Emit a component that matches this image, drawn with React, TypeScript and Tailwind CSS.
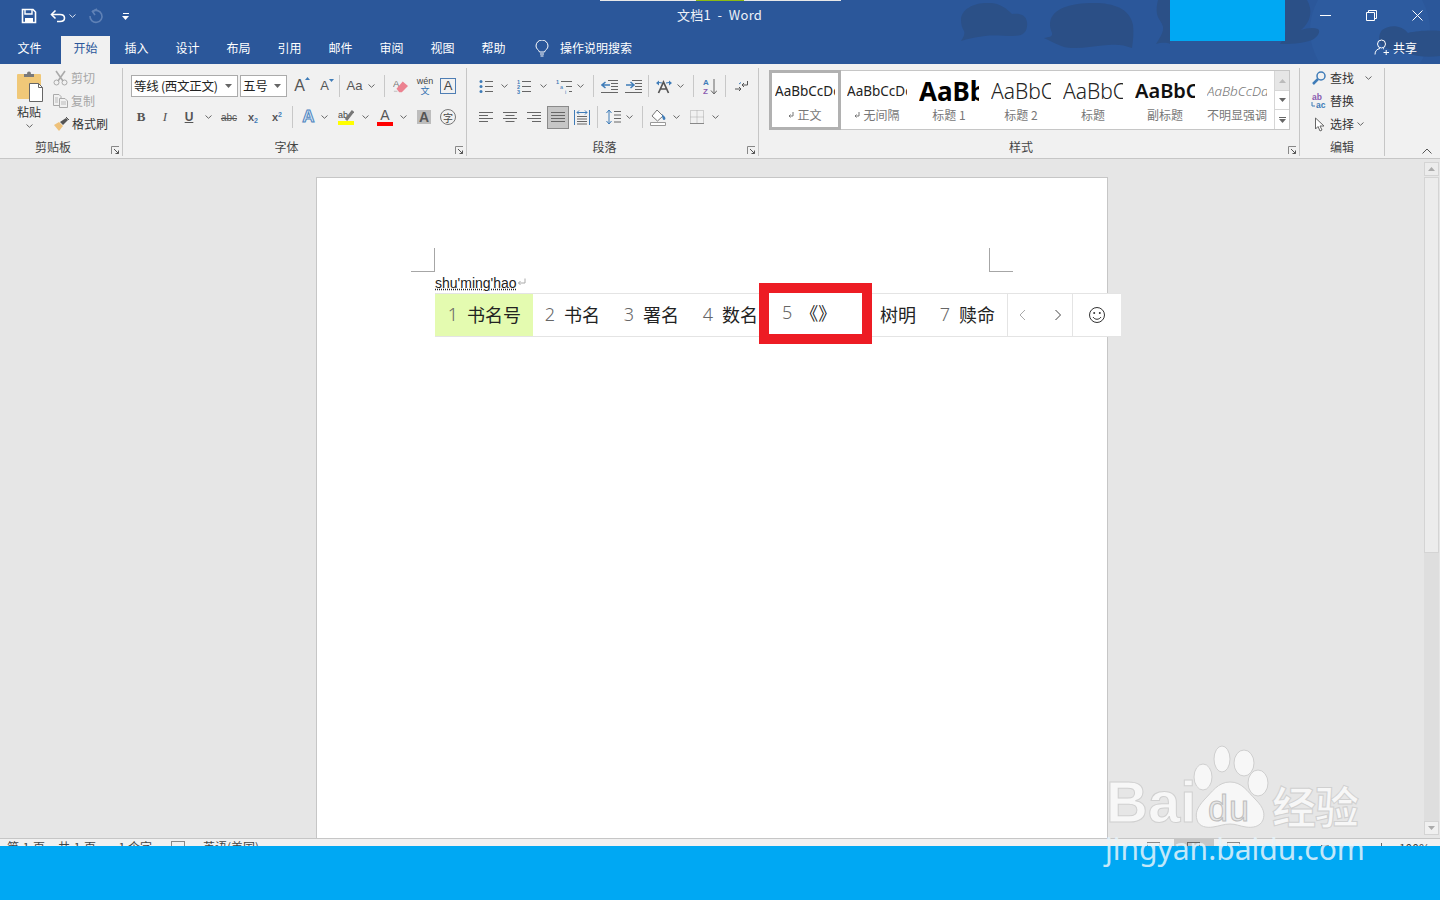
import React from "react";

const G = ({ w = 16, h = 16, className = "", children }: { w?: number; h?: number; className?: string; children: React.ReactNode }) => (
  <svg width={w} height={h} viewBox={`0 0 ${w} ${h}`} fill="none" className={className}>{children}</svg>
);
const Chev = ({ c = "#666" }: { c?: string }) => (
  <svg width="7" height="4" viewBox="0 0 7 4" fill="none" className="shrink-0"><path d="M0.500 0.500 3.500 3.300 6.500 0.500" stroke={c} strokeWidth="1" /></svg>
);
const Cell = ({ w, children }: { w: number; children?: React.ReactNode }) => (
  <div style={{ width: w }} className="flex h-full shrink-0 items-center justify-center">{children}</div>
);
const VSep = () => <div className="h-[22px] w-px shrink-0 bg-[#c8c8c8]" />;
const Launcher = () => (
  <svg width="9" height="9" viewBox="0 0 9 9" fill="none" className="shrink-0">
    <path d="M0.500 8V0.500H8" stroke="#888" />
    <path d="M3 3 7.500 7.500M7.500 4.500V7.500H4.500" stroke="#555" />
  </svg>
);
const Group = ({ w, label, lx, children }: { w: number; label: string; lx?: boolean; children: React.ReactNode }) => (
  <div style={{ width: w }} className="relative flex h-full shrink-0 flex-col border-r border-[#c6c6c6]">
    <div className="min-h-0 flex-1">{children}</div>
    <div className={`relative flex h-[18px] shrink-0 items-center justify-center text-[12px] text-[#444] ${lx !== false ? "pr-[16px]" : ""}`}>
      {label}
      {lx !== false && <div className="absolute right-[2px] top-[8px]"><Launcher /></div>}
    </div>
  </div>
);

const Align = ({ type }: { type: "l" | "c" | "r" | "j" }) => {
  const ws = type === "j" ? [14, 14, 14, 14] : [14, 9, 14, 9];
  return (
    <G w={14} h={12}>
      {ws.map((w, i) => {
        const x = type === "r" ? 14 - w : type === "c" ? (14 - w) / 2 : 0;
        return <path key={i} d={`M${x} ${i * 3 + 1.500}h${w}`} stroke="#666" />;
      })}
    </G>
  );
};

const tabs = ["插入", "设计", "布局", "引用", "邮件", "审阅", "视图", "帮助"];

const TitleBar = () => (
  <div className="relative flex h-[36px] shrink-0 items-center text-white">
    <div className="flex h-full items-center pb-[4px] pl-[21px]">
      <G w={16} h={16}>
        <path d="M1.500 1.500H12L14.500 4V14.500H1.500Z" stroke="#fff" strokeWidth="1.600" />
        <path d="M4 1.500V6H11V1.500" stroke="#fff" strokeWidth="1.400" />
        <path d="M4 14V10H12V14" fill="#fff" />
      </G>
      <div className="ml-[11px] flex items-center">
        <Cell w={20}>
          <svg width="16" height="14" viewBox="0 0 16 14" fill="none">
            <path d="M5.500 1.500 1.500 5.500 5.500 9.500" stroke="#fff" strokeWidth="1.600" />
            <path d="M2 5.500H10C13 5.500 14.500 7 14.500 9S13 12.500 10 12.500H7" stroke="#fff" strokeWidth="1.600" />
          </svg>
        </Cell>
        <div className="ml-[1px]"><Chev c="#dfe6f2" /></div>
      </div>
      <div className="ml-[12px]">
        <svg width="16" height="16" viewBox="0 0 16 16" fill="none">
          <path d="M4.500 3.500A6 6 0 1 1 2 8" stroke="#5f81b6" strokeWidth="1.600" />
          <path d="M9 1 4.500 3.500 7 7" stroke="#5f81b6" strokeWidth="1.600" />
        </svg>
      </div>
      <div className="ml-[18px] flex flex-col items-center gap-[2px]">
        <div className="h-px w-[6px] bg-white" />
        <svg width="7" height="4" viewBox="0 0 7 4"><path d="M0 0H7L3.500 4Z" fill="#fff" /></svg>
      </div>
    </div>
    <div className="absolute left-[677px] top-[6px] whitespace-pre text-[13px] leading-[18px] tracking-[0.300px] text-[#eef2f8]">文档1  -  Word</div>
    <div className="ml-auto flex h-full items-center pb-[6px]">
      <Cell w={46}><div className="h-px w-[11px] bg-white" /></Cell>
      <Cell w={46}>
        <svg width="11" height="11" viewBox="0 0 11 11" fill="none"><path d="M0.500 2.500H8.500V10.500H0.500ZM2.500 2.500V0.500H10.500V8.500H8.500" stroke="#fff" /></svg>
      </Cell>
      <Cell w={46}>
        <svg width="11" height="11" viewBox="0 0 11 11" fill="none"><path d="M0.500 0.500 10.500 10.500M10.500 0.500 0.500 10.500" stroke="#fff" /></svg>
      </Cell>
    </div>
  </div>
);

const TabBar = () => (
  <div className="relative flex h-[28px] shrink-0 items-stretch pl-[5px] text-[12px] text-white">
    <div className="flex w-[49px] items-center justify-center pb-[5px]">文件</div>
    <div className="ml-[7px] flex w-[49px] items-center justify-center bg-[#f1f1f1] pb-[5px] text-[#2b579a]">开始</div>
    <div className="ml-[2px] flex gap-[2px]">
      {tabs.map((t) => <div key={t} className="flex w-[49px] items-center justify-center pb-[5px]">{t}</div>)}
    </div>
    <div className="ml-[17px] flex items-center gap-[11px] pb-[4px]">
      <svg width="14" height="17" viewBox="0 0 14 17" fill="none">
        <path d="M4.500 12C4 10 1 9 1 6a6 6 0 0 1 12 0c0 3-3 4-3.500 6Z" stroke="#fff" />
        <path d="M5 14h4M5.500 16h3" stroke="#fff" />
      </svg>
      <span>操作说明搜索</span>
    </div>
    <div className="ml-auto mr-[23px] flex items-center gap-[3px] pb-[5px]">
      <svg width="16" height="17" viewBox="0 0 16 17" fill="none">
        <circle cx="7.500" cy="5" r="4" stroke="#fff" />
        <path d="M1 15.500C1 12 3 10 6 9.500M9 9.500 10 10" stroke="#fff" />
        <path d="M9.500 13.500H15M12.200 11V16" stroke="#fff" />
      </svg>
      <span>共享</span>
    </div>
  </div>
);

const Header = () => (
  <div className="relative shrink-0 bg-[#2b579a]">
    <svg className="absolute left-[950px] top-0" width="490" height="64" viewBox="0 0 490 64" fill="none">
      <circle cx="420" cy="30" r="60" fill="#2d5b9f" />
      <path d="M11 20C11 8 26 2 40 3c10 0 17 6 22 11 6-1 14 0 15 8 1 10-4 14-14 14-8 0-20-1-28 0-10 1-18 3-24 5 3-4 4-8 3-10-2-3-3-7-3-11Z" fill="#2b5087" />
      <path d="M100 25C100 10 116 4 140 3c20-1 40 4 43 22 1 8 0 16-1 23-8-3-14-4-24-3-14 1-32 5-44 2-6-2-12-5-20-9 5-1 9-1 8-5-1-3-2-5-2-8Z" fill="#2b4f86" />
      <path d="M208 0h12v44c-4-2-10-1-14 0 3-5 8-12 7-17-1-5-5-8-6-13-1-5 0-10 1-14Z" fill="#2b5087" />
      <path d="M335 0h22c6 10 4 22-6 30 6-2 12-3 17-1 3 2 0 8-6 11-10 4-24 4-32 4 6-8 6-14 5-20-1-8-1-16 0-24Z" fill="#2b5087" />
      <path d="M432 30c8-6 20-5 26 3 8-2 22-3 32-2v25c-14 2-24 0-34-3-8-2-16-3-22-6-6-4-6-12-2-17Z" fill="#2b5087" />
    </svg>
    <div className="absolute left-[600px] top-0 flex h-[1px] w-[241px] bg-[#e8e8e8]">
      <div className="ml-[96px] h-full w-[48px] bg-[#8dbb12]" />
    </div>
    <div className="absolute left-[1170px] top-0 h-[41px] w-[115px] bg-[#00a8f3]" />
    <TitleBar />
    <TabBar />
  </div>
);

const ClipboardGroup = () => (
  <Group w={123} label="剪贴板">
    <div className="flex pt-[3px]">
      <div className="ml-[13px] flex w-[32px] flex-col items-center">
        <svg width="30" height="31" viewBox="0 0 30 31" fill="none">
          <rect x="3" y="3" width="24" height="25" rx="1" fill="#f0c878" />
          <path d="M10 3h10v3H10Z" fill="#7a7a7a" />
          <circle cx="15" cy="2.500" r="2" fill="#7a7a7a" />
          <path d="M15.500 12.500h9l4 4v14h-13Z" fill="#fff" stroke="#666" />
          <path d="M24.500 12.500v4h4" stroke="#666" />
        </svg>
        <div className="mt-[1px] text-[12px] leading-[18px] text-[#333]">粘贴</div>
        <div className="mt-[3px]"><Chev /></div>
      </div>
      <div className="-mt-[2px] ml-[8px] flex flex-col gap-[5px] text-[12px] leading-[18px]">
        <div className="flex items-center gap-[3px] text-[#a6a6a6]">
          <svg width="15" height="16" viewBox="0 0 15 16" fill="none">
            <path d="M3 1 10 11M12 1 5 11" stroke="#aaa" strokeWidth="1.600" />
            <circle cx="3.500" cy="12.500" r="2.500" stroke="#aaa" /><circle cx="11.500" cy="12.500" r="2.500" stroke="#aaa" />
          </svg>
          <span>剪切</span>
        </div>
        <div className="flex items-center gap-[3px] text-[#a6a6a6]">
          <svg width="15" height="14" viewBox="0 0 15 14" fill="none">
            <path d="M0.500 0.500H6L8 2.500V11.500H0.500Z" stroke="#aaa" />
            <path d="M6.500 4.500H12L14.500 7V13.500H6.500Z" fill="#f1f1f1" stroke="#aaa" />
            <path d="M8 8h5M8 10h5M2 4h3M2 6h3M2 8h3" stroke="#bbb" />
          </svg>
          <span>复制</span>
        </div>
        <div className="flex items-center gap-[2px] text-[#333]">
          <svg width="17" height="15" viewBox="0 0 17 15" fill="none">
            <path d="M1 8 6 14 10 9 6 5Z" fill="#eec17a" />
            <path d="M7 5 10 8 15 3 13 1Z" fill="#555" />
            <path d="M13 0l3 3" stroke="#555" />
          </svg>
          <span>格式刷</span>
        </div>
      </div>
    </div>
  </Group>
);

const FontBox = ({ w, text }: { w: number; text: string }) => (
  <div style={{ width: w }} className="flex h-[22px] shrink-0 items-center justify-between border border-[#ababab] bg-white pl-[2px] pr-[5px] text-[12.500px] tracking-[-0.300px] text-[#222]">
    <span className="whitespace-pre">{text}</span>
    <svg width="7" height="4" viewBox="0 0 7 4"><path d="M0 0H7L3.500 4Z" fill="#666" /></svg>
  </div>
);

const BigA = ({ size, dir }: { size: number; dir: "up" | "down" }) => (
  <div className="relative flex items-center justify-center font-['Liberation_Sans'] font-normal text-[#555]" style={{ fontSize: size }}>
    A
    <svg width="5" height="3" viewBox="0 0 5 3" className="absolute -right-[5px] top-[3px]">
      <path d={dir === "up" ? "M0 3H5L2.500 0Z" : "M0 0H5L2.500 3Z"} fill="#3f7cb8" />
    </svg>
  </div>
);

const FontGroup = () => (
  <Group w={344} label="字体">
    <div className="mt-[6px] flex h-[24px] items-center pl-[8px]">
      <FontBox w={107} text="等线 (西文正文)" />
      <div className="ml-[2px]"><FontBox w={47} text="五号" /></div>
      <div className="ml-[6px]"><Cell w={13}><BigA size={16} dir="up" /></Cell></div>
      <div className="ml-[12px]"><Cell w={13}><BigA size={13} dir="down" /></Cell></div>
      <div className="ml-[8px]"><VSep /></div>
      <div className="ml-[7px]"><Cell w={15}><span className="font-['Liberation_Sans'] text-[13px] text-[#555]">Aa</span></Cell></div>
      <div className="ml-[6px]"><Chev /></div>
      <div className="ml-[9px]"><VSep /></div>
      <div className="ml-[8px]">
        <Cell w={15}>
          <svg width="17" height="16" viewBox="0 0 17 16" fill="none">
            <text x="0" y="9" fontSize="11" fontFamily="Liberation Sans" fill="#777">A</text>
            <path d="M4 11 11 3 17 8 10 15H7Z" fill="#ec8290" />
            <path d="M1 14h4" stroke="#bbb" />
          </svg>
        </Cell>
      </div>
      <div className="ml-[9px]">
        <Cell w={16}>
          <div className="flex flex-col items-center leading-none">
            <span className="font-['Liberation_Sans'] text-[9px] leading-[9px] text-[#444]">wén</span>
            <span className="text-[9px] leading-[9px] text-[#2f6fb0]">文</span>
          </div>
        </Cell>
      </div>
      <div className="ml-[7px] flex h-[16px] w-[16px] items-center justify-center border border-[#4f7eb4] font-['Liberation_Sans'] text-[13px] text-[#444]">A</div>
    </div>
    <div className="mt-[8px] flex h-[22px] items-center pl-[6px] text-[#555]">
      <Cell w={24}><span className="font-['Liberation_Serif'] text-[13px] font-bold">B</span></Cell>
      <Cell w={24}><span className="font-['Liberation_Serif'] text-[13px] italic">I</span></Cell>
      <Cell w={24}><span className="font-['Liberation_Sans'] text-[12px] font-bold underline">U</span></Cell>
      <div className="ml-[4px]"><Chev /></div>
      <div className="ml-[9px]"><Cell w={16}><span className="font-['Liberation_Sans'] text-[10px] line-through">abc</span></Cell></div>
      <div className="ml-[10px]"><Cell w={12}><span className="whitespace-nowrap font-['Liberation_Sans'] text-[11px] font-bold">x<sub className="text-[7px] text-[#3f7cb8]">2</sub></span></Cell></div>
      <div className="ml-[12px]"><Cell w={12}><span className="whitespace-nowrap font-['Liberation_Sans'] text-[11px] font-bold">x<sup className="text-[7px] text-[#3f7cb8]">2</sup></span></Cell></div>
      <div className="ml-[9px]"><VSep /></div>
      <div className="ml-[9px]"><Cell w={13}><span className="font-['Liberation_Sans'] text-[17px] font-bold text-[#dbe8f6] [-webkit-text-stroke:1px_#4f86c0]">A</span></Cell></div>
      <div className="ml-[6px]"><Chev /></div>
      <div className="ml-[10px]">
        <Cell w={16}>
          <div className="flex flex-col items-center">
            <svg width="16" height="12" viewBox="0 0 16 12" fill="none">
              <text x="0" y="9" fontSize="9" fontFamily="Liberation Sans" fill="#444">ab</text>
              <path d="M8 11 15 2" stroke="#777" strokeWidth="3" />
            </svg>
            <div className="h-[4px] w-[16px] bg-[#ffff00]" />
          </div>
        </Cell>
      </div>
      <div className="ml-[8px]"><Chev /></div>
      <div className="ml-[8px]">
        <Cell w={16}>
          <div className="flex flex-col items-center">
            <span className="font-['Liberation_Sans'] text-[14px] leading-[13px] text-[#555]">A</span>
            <div className="h-[4px] w-[16px] bg-[#ff0000]" />
          </div>
        </Cell>
      </div>
      <div className="ml-[7px]"><Chev /></div>
      <div className="ml-[10px] flex h-[14px] w-[14px] items-center justify-center bg-[#bdbdbd] font-['Liberation_Sans'] text-[14px] font-bold text-[#555]">A</div>
      <div className="ml-[9px] flex h-[16px] w-[16px] items-center justify-center rounded-full border border-[#777] text-[10px] text-[#444]">字</div>
    </div>
  </Group>
);

const ParagraphGroup = () => (
  <Group w={292} label="段落">
    <div className="mt-[7px] flex h-[22px] items-center pl-[12px]">
      <G w={14} h={15}>
        <circle cx="2" cy="2.500" r="1.500" fill="#3f7cb8" /><circle cx="2" cy="7.500" r="1.500" fill="#3f7cb8" /><circle cx="2" cy="12.500" r="1.500" fill="#3f7cb8" />
        <path d="M6 2.500h8M6 7.500h8M6 12.500h8" stroke="#666" />
      </G>
      <div className="ml-[8px]"><Chev /></div>
      <div className="ml-[9px]">
        <svg width="15" height="15" viewBox="0 0 15 15" fill="none">
          <text x="0" y="5" fontSize="5.500" fontFamily="Liberation Sans" fill="#3f7cb8" fontWeight="bold">1</text>
          <text x="0" y="10" fontSize="5.500" fontFamily="Liberation Sans" fill="#3f7cb8" fontWeight="bold">2</text>
          <text x="0" y="15" fontSize="5.500" fontFamily="Liberation Sans" fill="#3f7cb8" fontWeight="bold">3</text>
          <path d="M5 2.500h9M5 7.500h9M5 12.500h9" stroke="#666" />
        </svg>
      </div>
      <div className="ml-[8px]"><Chev /></div>
      <div className="ml-[9px]">
        <svg width="16" height="15" viewBox="0 0 16 15" fill="none">
          <text x="0" y="5" fontSize="5.500" fontFamily="Liberation Sans" fill="#3f7cb8" fontWeight="bold">1</text>
          <text x="4" y="10" fontSize="5.500" fontFamily="Liberation Sans" fill="#3f7cb8">a</text>
          <text x="9" y="15" fontSize="5.500" fontFamily="Liberation Sans" fill="#3f7cb8">i</text>
          <path d="M5 2.500h11M10 7.500h6M13 12.500h3" stroke="#666" />
        </svg>
      </div>
      <div className="ml-[5px]"><Chev /></div>
      <div className="ml-[9px]"><VSep /></div>
      <div className="ml-[7px]">
        <svg width="17" height="13" viewBox="0 0 17 13" fill="none">
          <path d="M7 0.500h10M10 3.500h7M10 6.500h7M10 9.500h7M0 12.500h17" stroke="#666" />
          <path d="M1 5h8M4.500 2 1 5l3.500 3" stroke="#3f7cb8" strokeWidth="1.500" />
        </svg>
      </div>
      <div className="ml-[7px]">
        <svg width="17" height="13" viewBox="0 0 17 13" fill="none">
          <path d="M7 0.500h10M10 3.500h7M10 6.500h7M10 9.500h7M0 12.500h17" stroke="#666" />
          <path d="M1 5h8M5.500 2 9 5 5.500 8" stroke="#3f7cb8" strokeWidth="1.500" />
        </svg>
      </div>
      <div className="ml-[6px]"><VSep /></div>
      <div className="ml-[7px]">
        <svg width="16" height="15" viewBox="0 0 16 15" fill="none">
          <path d="M2.500 14 7.500 3l5 11M4.500 10h6" stroke="#555" strokeWidth="1.700" />
          <path d="M0 4 3 1.500 3 6.500ZM16 4l-3-2.500v5Z" fill="#3f7cb8" />
          <path d="M3 3.500 6 4M13 3.500 10 4" stroke="#3f7cb8" />
        </svg>
      </div>
      <div className="ml-[5px]"><Chev /></div>
      <div className="ml-[9px]"><VSep /></div>
      <div className="ml-[9px]">
        <svg width="14" height="17" viewBox="0 0 14 17" fill="none">
          <text x="0" y="7" fontSize="8" fontFamily="Liberation Sans" fontWeight="bold" fill="#3f7cb8">A</text>
          <text x="0" y="16" fontSize="8" fontFamily="Liberation Sans" fontWeight="bold" fill="#8a5cb0">Z</text>
          <path d="M11 1V15M8 12.500 11 16 14 12.500" stroke="#666" />
        </svg>
      </div>
      <div className="ml-[8px]"><VSep /></div>
      <div className="ml-[9px]">
        <svg width="13" height="13" viewBox="0 0 13 13" fill="none">
          <path d="M12.500 1V5H7M9 3 7 5l2 2" stroke="#555" />
          <path d="M0 9h6M4 7l2 2-2 2" stroke="#555" />
          <path d="M6 2.500 4 4" stroke="#3f7cb8" />
        </svg>
      </div>
    </div>
    <div className="mt-[8px] flex h-[24px] items-center pl-[12px]">
      <Align type="l" />
      <div className="ml-[10px]"><Align type="c" /></div>
      <div className="ml-[10px]"><Align type="r" /></div>
      <div className="ml-[6px] flex h-[23px] w-[22px] items-center justify-center border border-[#8a8a8a] bg-[#c6c6c6]"><Align type="j" /></div>
      <div className="ml-[5px]">
        <svg width="16" height="15" viewBox="0 0 16 15" fill="none">
          <path d="M0.500 0v15M15.500 0v15" stroke="#3f7cb8" />
          <path d="M3 2.500h10M5 0.500 3 2.500l2 2M11 0.500l2 2-2 2" stroke="#3f7cb8" />
          <path d="M3 6.500h10M3 9h10M3 11.500h10M3 14h10" stroke="#666" />
        </svg>
      </div>
      <div className="ml-[7px]"><VSep /></div>
      <div className="ml-[8px]">
        <svg width="15" height="16" viewBox="0 0 15 16" fill="none">
          <path d="M3 1V15M0.500 4 3 1l2.500 3M0.500 12 3 15l2.500-3" stroke="#3f7cb8" />
          <path d="M8 2.500h7M8 6h7M8 9.500h7M8 13h7" stroke="#666" />
        </svg>
      </div>
      <div className="ml-[5px]"><Chev /></div>
      <div className="ml-[9px]"><VSep /></div>
      <div className="ml-[7px]">
        <svg width="16" height="17" viewBox="0 0 16 17" fill="none">
          <path d="M7 1 13 7 7.500 12 2 7Z" fill="#fff" stroke="#777" />
          <path d="M12 5l3 3c1 2 0 3-1 3s-2-2-2-6Z" fill="#3f7cb8" />
          <path d="M0.500 13.500h15v3H0.500Z" fill="#fff" stroke="#999" />
        </svg>
      </div>
      <div className="ml-[7px]"><Chev /></div>
      <div className="ml-[10px]">
        <svg width="14" height="14" viewBox="0 0 14 14" fill="none">
          <path d="M0.500 0.500H13.500V13.500H0.500ZM7 0.500V13.500M0.500 7H13.500" stroke="#aaa" strokeDasharray="1 1" />
          <path d="M0 13.500H14" stroke="#888" />
        </svg>
      </div>
      <div className="ml-[8px]"><Chev /></div>
    </div>
  </Group>
);

const styleCells = [
  { s: "AaBbCcDd", cls: "text-[13.500px] leading-[22px] text-[#222]", label: "正文", ret: true },
  { s: "AaBbCcDd", cls: "text-[13.500px] leading-[22px] text-[#222]", label: "无间隔", ret: true },
  { s: "AaBbC", cls: "text-[26px] font-bold leading-[24px] text-black", label: "标题 1" },
  { s: "AaBbCc", cls: "text-[21px] font-light leading-[24px] text-[#222]", label: "标题 2" },
  { s: "AaBbCc", cls: "text-[21px] font-light leading-[24px] text-[#222]", label: "标题" },
  { s: "AaBbCc", cls: "text-[20px] font-semibold leading-[24px] text-[#111]", label: "副标题" },
  { s: "AaBbCcDd", cls: "text-[13.500px] font-light italic leading-[22px] text-[#777]", label: "不明显强调" },
];

const StylesGroup = () => (
  <Group w={541} label="样式">
    <div className="ml-[10px] mt-[2px] flex h-[60px] w-[521px] border border-[#c6c6c6] bg-white">
      <div className="-ml-px -mt-px flex h-[60px] shrink-0">
        {styleCells.map((c, i) => (
          <div key={i} className={`flex h-[60px] w-[72px] shrink-0 flex-col items-center border-[3px] ${i === 0 ? "border-[#b1b1b1]" : "border-transparent"}`}>
            <div className="mt-[6px] flex h-[24px] w-[60px] items-center justify-start overflow-hidden whitespace-nowrap">
              <span className={`font-['Noto_Sans'] ${c.cls}`}>{c.s}</span>
            </div>
            <div className="mt-[4px] flex items-center gap-[3px] whitespace-nowrap text-[12px] leading-[16px] text-[#777]">
              {c.ret && <svg width="6" height="7" viewBox="0 0 6 7" fill="none"><path d="M5 0V4H1M2.500 2.500 1 4l1.500 1.500" stroke="#777" /></svg>}
              {c.label}
            </div>
          </div>
        ))}
      </div>
      <div className="ml-auto flex w-[15px] shrink-0 flex-col border-l border-[#d6d6d6]">
        <div className="flex h-[20px] items-center justify-center border-b border-[#d6d6d6] bg-[#e6e6e6]">
          <svg width="7" height="4" viewBox="0 0 7 4"><path d="M0 4H7L3.500 0Z" fill="#bbb" /></svg>
        </div>
        <div className="flex h-[19px] items-center justify-center border-b border-[#d6d6d6]">
          <svg width="7" height="4" viewBox="0 0 7 4"><path d="M0 0H7L3.500 4Z" fill="#666" /></svg>
        </div>
        <div className="flex flex-1 flex-col items-center justify-center gap-[1px]">
          <div className="h-px w-[7px] bg-[#666]" />
          <svg width="7" height="4" viewBox="0 0 7 4"><path d="M0 0H7L3.500 4Z" fill="#666" /></svg>
        </div>
      </div>
    </div>
  </Group>
);

const EditGroup = () => (
  <Group w={85} label="编辑" lx={false}>
    <div className="flex flex-col gap-[5px] pl-[12px] pt-[1px] text-[12px] leading-[18px] text-[#333]">
      <div className="flex items-center gap-[4px]">
        <svg width="14" height="14" viewBox="0 0 14 14" fill="none">
          <circle cx="9" cy="5" r="4" stroke="#3f7cb8" strokeWidth="1.500" />
          <path d="M6 8 1 13" stroke="#3f7cb8" strokeWidth="2.500" />
        </svg>
        <span>查找</span>
        <div className="ml-[7px]"><Chev /></div>
      </div>
      <div className="-ml-[1px] flex items-center gap-[3px]">
        <svg width="16" height="16" viewBox="0 0 16 16" fill="none">
          <text x="1" y="7" fontSize="8.500" fontFamily="Liberation Sans" fontWeight="bold" fill="#8a5cb0">ab</text>
          <text x="5" y="15" fontSize="8.500" fontFamily="Liberation Sans" fontWeight="bold" fill="#3f7cb8">ac</text>
          <path d="M1 9v4h3" stroke="#3f7cb8" />
        </svg>
        <span>替换</span>
      </div>
      <div className="flex items-center gap-[4px]">
        <svg width="14" height="15" viewBox="0 0 14 15" fill="none">
          <path d="M3.500 1V12L6 9.500 8 14 10 13 8 9h4Z" fill="#fff" stroke="#666" />
        </svg>
        <span>选择</span>
        <div className="-ml-[1px]"><Chev /></div>
      </div>
    </div>
  </Group>
);

const Ribbon = () => (
  <div className="relative flex h-[95px] shrink-0 border-b border-[#c6c6c6] bg-[#f1f1f1] pb-[2px] pt-[4px]">
    <ClipboardGroup />
    <FontGroup />
    <ParagraphGroup />
    <StylesGroup />
    <EditGroup />
    <div className="absolute right-[8px] top-[84px]">
      <svg width="10" height="6" viewBox="0 0 10 6" fill="none"><path d="M0.500 5.500 5 1l4.500 4.500" stroke="#555" /></svg>
    </div>
  </div>
);

const Candidate = ({ n, t, w, active, pr = 12 }: { n?: string; t: string; w: number; active?: boolean; pr?: number }) => (
  <div style={{ width: w, paddingRight: pr }} className={`flex h-full shrink-0 items-center justify-end whitespace-nowrap pb-[2px] text-[18px] text-[#222] ${active ? "bg-[#e4fbb0]" : ""}`}>
    {n && <span className="mr-[9px] font-['Noto_Sans'] font-light text-[#666]">{n}</span>}
    <span>{t}</span>
  </div>
);

const CandidateBar = () => (
  <div className="absolute left-[435px] top-[293px] flex h-[44px] w-[686px] items-stretch border-y border-[#e4e4e4] bg-white">
    <Candidate n="1" t="书名号" w={98} active />
    <Candidate n="2" t="书名" w={79} />
    <Candidate n="3" t="署名" w={79} />
    <Candidate n="4" t="数名" w={68} pr={1} />
    <div className="w-[113px] shrink-0" />
    <Candidate t="树明" w={56} />
    <Candidate n="7" t="赎命" w={79} />
    <div className="flex w-[66px] shrink-0 border-x border-[#e4e4e4]">
      <div className="flex flex-1 items-center justify-center pr-[4px]">
        <svg width="8" height="12" viewBox="0 0 8 12" fill="none"><path d="M7 1 2 6l5 5" stroke="#aaa" /></svg>
      </div>
      <div className="flex flex-1 items-center justify-center pl-[4px]">
        <svg width="8" height="12" viewBox="0 0 8 12" fill="none"><path d="M1.500 1l5 5-5 5" stroke="#444" /></svg>
      </div>
    </div>
    <div className="flex flex-1 items-center justify-center">
      <svg width="18" height="18" viewBox="0 0 18 18" fill="none">
        <circle cx="9" cy="9" r="7.500" stroke="#333" />
        <circle cx="6.200" cy="7" r="1" fill="#333" /><circle cx="11.800" cy="7" r="1" fill="#333" />
        <path d="M5 11c2 3 6 3 8 0" stroke="#333" />
      </svg>
    </div>
  </div>
);

const RedBox = () => (
  <div className="absolute left-[759px] top-[283px] flex h-[61px] w-[113px] items-center border-[10px] border-[#ed1c24] bg-white pb-[2px] pl-[13px] text-[18px] text-[#222]">
    <span className="font-['Noto_Sans'] font-light text-[#666]">5</span>
    <span className="ml-[8px] whitespace-nowrap">《》</span>
  </div>
);

const Canvas = () => (
  <div className="flex min-h-0 flex-1 bg-[#e6e6e6]">
    <div className="flex min-w-0 flex-1">
      <div className="relative ml-[316px] mt-[18px] w-[792px] border-x border-t border-[#c6c6c6] bg-white">
        <div className="absolute left-[94px] top-[70px] h-[24px] w-[24px] border-b border-r border-[#a6a6a6]" />
        <div className="absolute left-[672px] top-[70px] h-[24px] w-[24px] border-b border-l border-[#a6a6a6]" />
        <div className="absolute left-[118px] top-[97px] flex items-center font-['Liberation_Sans'] text-[14px] leading-[17px] text-[#222]">
          <span className="underline decoration-dotted decoration-[#222] underline-offset-[1px]">shu'ming'hao</span>
          <svg width="9" height="9" viewBox="0 0 9 9" fill="none" className="mt-[-2px]"><path d="M8 0.500V5H1.500M3.500 3 1.500 5l2 2" stroke="#aaa" /></svg>
        </div>
      </div>
    </div>
    <div className="flex w-[16px] shrink-0 flex-col pt-[3px]">
      <div className="flex h-[14px] w-[15px] items-center justify-center border border-[#d4d4d4] bg-[#ececec]">
        <svg width="7" height="4" viewBox="0 0 7 4"><path d="M0 4H7L3.500 0Z" fill="#ababab" /></svg>
      </div>
      <div className="mt-px flex w-[15px] flex-1 flex-col bg-[#dedede]">
        <div className="h-[376px] w-[15px] border border-[#d4d4d4] bg-[#ececec]" />
        <div className="flex-1" />
      </div>
      <div className="mb-[3px] flex h-[14px] w-[15px] items-center justify-center border border-[#d4d4d4] bg-[#f0f0f0]">
        <svg width="7" height="4" viewBox="0 0 7 4"><path d="M0 0H7L3.500 4Z" fill="#ababab" /></svg>
      </div>
    </div>
  </div>
);

const StatusBar = () => (
  <div className="relative flex h-[8px] shrink-0 overflow-hidden border-t border-[#c6c6c6] bg-[#f1f1f1] text-[12px] leading-[18px] text-[#444]">
    <div className="-mt-[1px] flex pl-[7px]">
      <span className="whitespace-pre tracking-[0.500px]">第 1 页，共 1 页</span>
      <span className="ml-[22px] whitespace-pre">1 个字</span>
      <div className="ml-[19px] mt-[3px] h-[14px] w-[14px] border border-[#888]" />
      <span className="ml-[18px]">英语(美国)</span>
    </div>
    <div className="ml-auto flex pr-[10px]">
      <div className="mt-[3px] h-[14px] w-[13px] border border-[#888]" />
      <div className="ml-[14px] flex h-[8px] w-[40px] items-start justify-center bg-[#c6c6c6] pt-[3px]">
        <div className="h-[14px] w-[13px] border border-[#666]" />
      </div>
      <div className="ml-[13px] mt-[3px] h-[14px] w-[13px] border border-[#888]" />
      <div className="ml-[81px] mt-[6px] h-px w-[8px] bg-[#666]" />
      <div className="ml-[52px] mt-[4px] h-[6px] w-px bg-[#666]" />
      <span className="ml-[17px]">100%</span>
    </div>
  </div>
);

const Watermark = () => (
  <div className="pointer-events-none absolute left-[1100px] top-[745px] h-[130px] w-[270px]">
    <svg width="270" height="90" viewBox="0 0 270 90" className="absolute left-0 top-0">
      <g fill="#f7f7f7" stroke="#cfcfcf" strokeWidth="1">
        <ellipse cx="122" cy="14" rx="8" ry="13" />
        <ellipse cx="144" cy="18" rx="10" ry="13" />
        <ellipse cx="103" cy="32" rx="9" ry="13" />
        <ellipse cx="158" cy="38" rx="10" ry="13" />
        <path d="M130 37c12 0 17 9 26 18 8 8 9 14 7 20-3 7-11 8-17 7-7-1-10-3-16-3s-10 2-17 3c-6 1-14 0-16-7-2-7 0-12 7-20 8-8 14-18 26-18Z" />
      </g>
    </svg>
    <span className="absolute left-[6px] top-[22px] font-['Liberation_Sans'] text-[58px] font-bold leading-[70px] text-[#f7f7f7] [-webkit-text-stroke:1px_#d0d0d0]">Bai</span>
    <span className="absolute left-[108px] top-[44px] font-['Liberation_Sans'] text-[36px] font-normal leading-[40px] tracking-[1px] text-[#e6e6e6] [-webkit-text-stroke:1px_#bdbdbd]">du</span>
    <span className="absolute left-[172px] top-[35px] whitespace-nowrap text-[44px] font-bold leading-[50px] tracking-[-1px] text-[#f7f7f7] [-webkit-text-stroke:1px_#d0d0d0]">经验</span>
    <span className="absolute left-[5px] top-[84px] font-['Noto_Sans'] text-[30px] leading-[40px] text-[#e7f4fb]/85">jingyan.baidu.com</span>
  </div>
);

export default function App() {
  return (
    <div className="relative flex h-[900px] w-[1440px] flex-col overflow-hidden bg-[#e6e6e6] font-['Noto_Sans_CJK_SC',sans-serif]">
      <Header />
      <Ribbon />
      <Canvas />
      <StatusBar />
      <div className="h-[54px] shrink-0 bg-[#00a8f3]" />
      <CandidateBar />
      <RedBox />
      <Watermark />
    </div>
  );
}
